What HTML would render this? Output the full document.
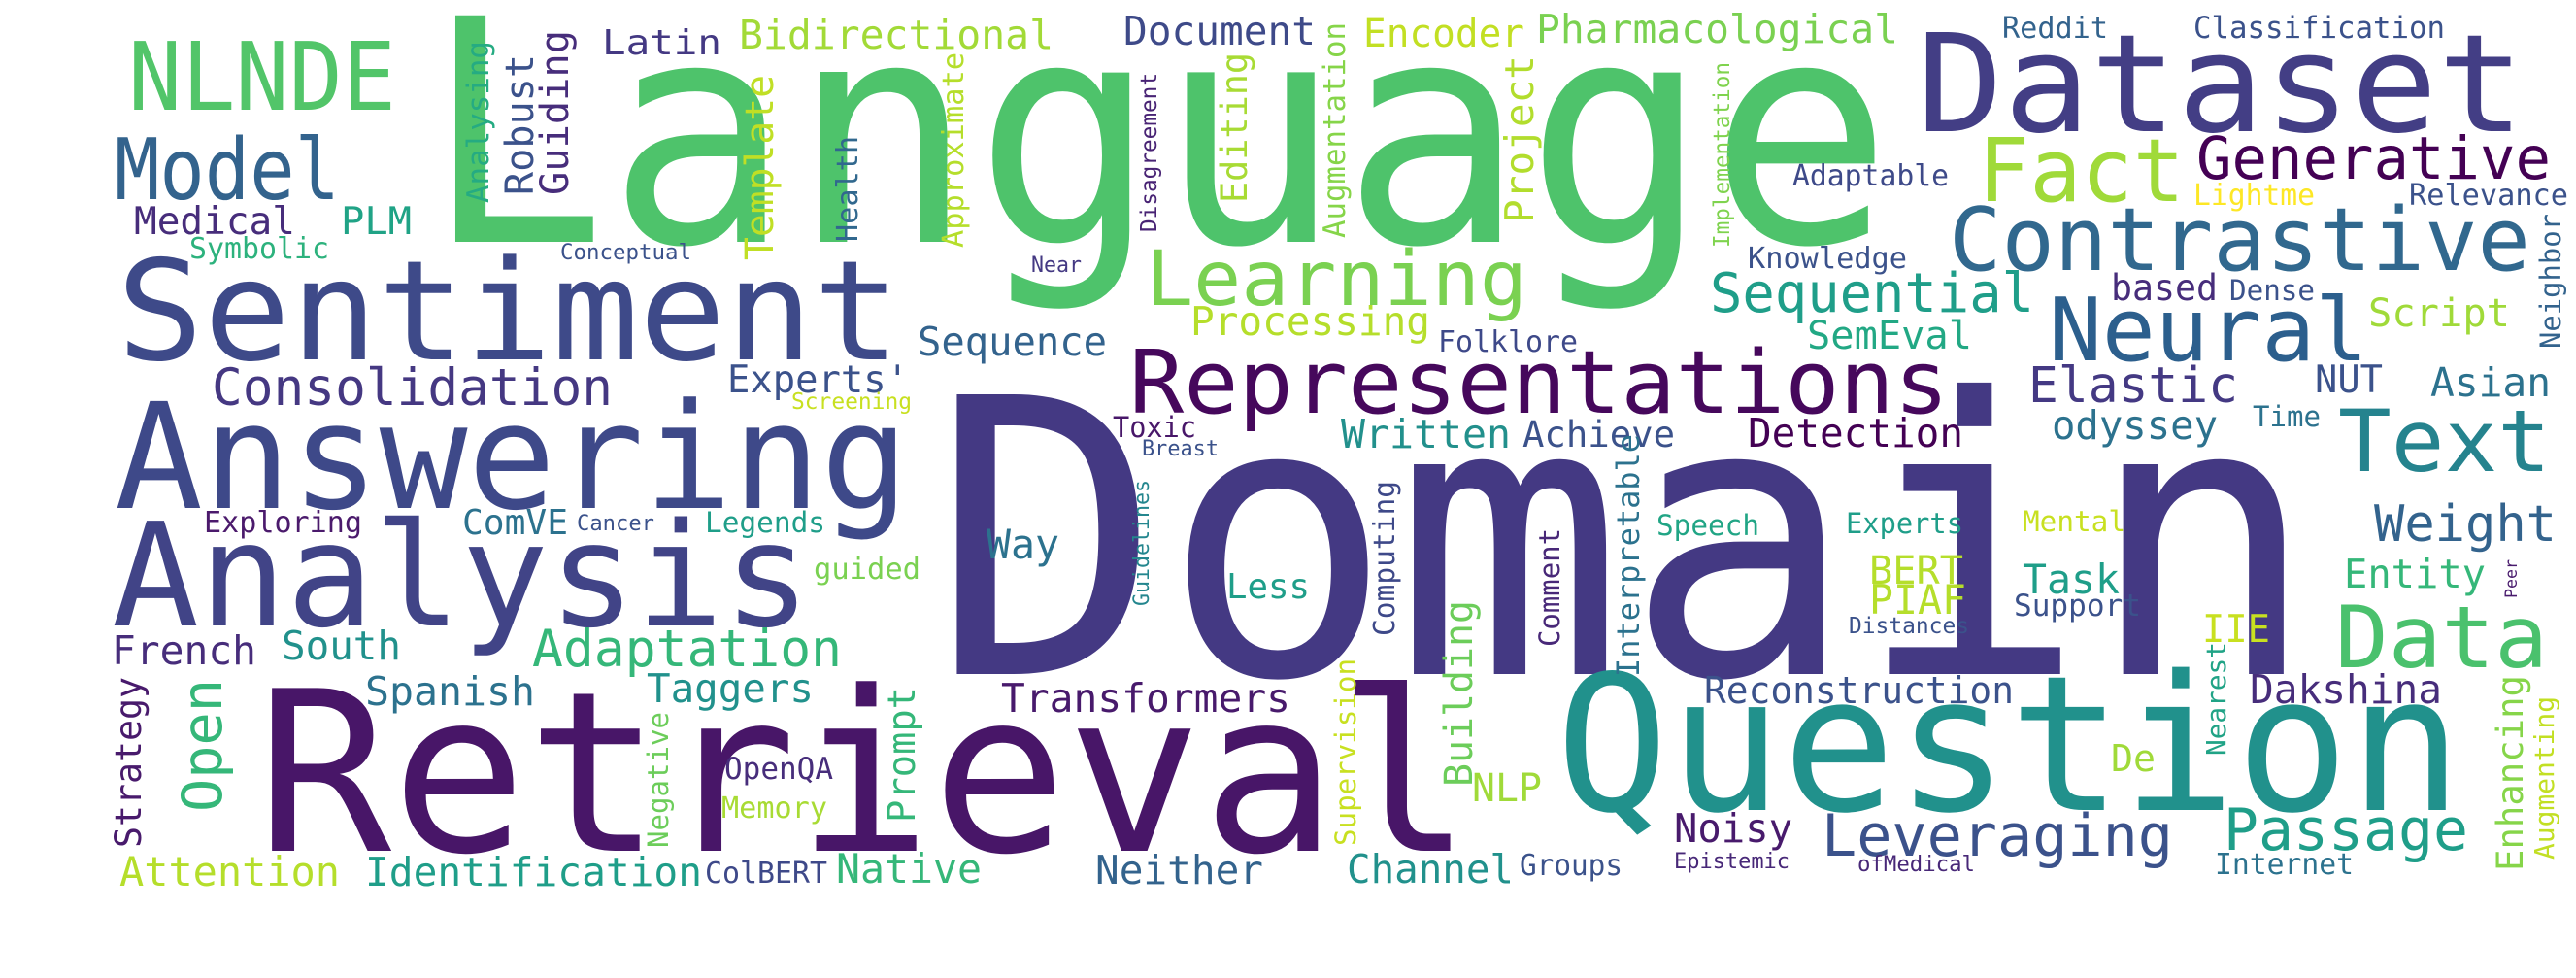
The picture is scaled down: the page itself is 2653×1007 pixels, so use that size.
<!DOCTYPE html>
<html><head><meta charset="utf-8"><style>
html,body{margin:0;padding:0;background:#fff;}
svg{display:block;}
text{font-family:"DejaVu Sans Mono","Liberation Mono",monospace;}
</style></head><body>
<svg width="2653" height="1007" viewBox="0 0 2653 1007" xmlns="http://www.w3.org/2000/svg">
<rect width="2653" height="1007" fill="#fff"/>
<g lengthAdjust="spacingAndGlyphs">
<!-- big words -->
<text x="436" y="249" font-size="320" fill="#4ec36b" textLength="1513" lengthAdjust="spacingAndGlyphs">Language</text>
<text x="959" y="694" font-size="395" fill="#443983" textLength="1428" lengthAdjust="spacingAndGlyphs">Domain</text>
<text x="264" y="876" font-size="230" fill="#481668" textLength="1252" lengthAdjust="spacingAndGlyphs">Retrieval</text>
<text x="1602" y="834" font-size="194" fill="#21918c" textLength="934" lengthAdjust="spacingAndGlyphs">Question</text>
<text x="1974" y="135" font-size="140" fill="#433e85" textLength="626" lengthAdjust="spacingAndGlyphs">Dataset</text>
<text x="120" y="370" font-size="143" fill="#3e4a89" textLength="807" lengthAdjust="spacingAndGlyphs">Sentiment</text>
<text x="118" y="523" font-size="151" fill="#3e4989" textLength="818" lengthAdjust="spacingAndGlyphs">Answering</text>
<text x="115" y="644" font-size="148" fill="#414487" textLength="720" lengthAdjust="spacingAndGlyphs">Analysis</text>
<text x="1163" y="425" font-size="90" fill="#46085c" textLength="844" lengthAdjust="spacingAndGlyphs">Representations</text>
<text x="132" y="113" font-size="97" fill="#52c569" textLength="276" lengthAdjust="spacingAndGlyphs">NLNDE</text>
<text x="118" y="205" font-size="87" fill="#33638d" textLength="232" lengthAdjust="spacingAndGlyphs">Model</text>
<text x="2037" y="207" font-size="90" fill="#a0da39" textLength="213" lengthAdjust="spacingAndGlyphs">Fact</text>
<text x="2262" y="184" font-size="61" fill="#440154" textLength="365" lengthAdjust="spacingAndGlyphs">Generative</text>
<text x="2007" y="278" font-size="90" fill="#31688e" textLength="599" lengthAdjust="spacingAndGlyphs">Contrastive</text>
<text x="2110" y="371" font-size="90" fill="#2c5f8d" textLength="329" lengthAdjust="spacingAndGlyphs">Neural</text>
<text x="2408" y="485" font-size="88" fill="#25838e" textLength="219" lengthAdjust="spacingAndGlyphs">Text</text>
<text x="2405" y="687" font-size="88" fill="#4ac16d" textLength="219" lengthAdjust="spacingAndGlyphs">Data</text>
<text x="1180" y="314" font-size="78" fill="#7ad151" textLength="393" lengthAdjust="spacingAndGlyphs">Learning</text>
<!-- medium/small horizontal -->
<text x="138" y="241" font-size="39" fill="#472d7b" textLength="166" lengthAdjust="spacingAndGlyphs">Medical</text>
<text x="351" y="241" font-size="39" fill="#20a386" textLength="73" lengthAdjust="spacingAndGlyphs">PLM</text>
<text x="195" y="266" font-size="30" fill="#2db27d" textLength="144" lengthAdjust="spacingAndGlyphs">Symbolic</text>
<text x="620" y="56" font-size="36" fill="#443983" textLength="123" lengthAdjust="spacingAndGlyphs">Latin</text>
<text x="577" y="267" font-size="22" fill="#3b528b" textLength="135" lengthAdjust="spacingAndGlyphs">Conceptual</text>
<text x="218" y="417" font-size="53" fill="#453882" textLength="413" lengthAdjust="spacingAndGlyphs">Consolidation</text>
<text x="749" y="404" font-size="39" fill="#3b528b" textLength="187" lengthAdjust="spacingAndGlyphs">Experts'</text>
<text x="815" y="421" font-size="23" fill="#c8e020" textLength="124" lengthAdjust="spacingAndGlyphs">Screening</text>
<text x="210" y="548" font-size="30" fill="#4b1a6c" textLength="163" lengthAdjust="spacingAndGlyphs">Exploring</text>
<text x="476" y="550" font-size="36" fill="#2c728e" textLength="109" lengthAdjust="spacingAndGlyphs">ComVE</text>
<text x="594" y="546" font-size="22" fill="#3b528b" textLength="80" lengthAdjust="spacingAndGlyphs">Cancer</text>
<text x="726" y="548" font-size="29" fill="#1f9e89" textLength="124" lengthAdjust="spacingAndGlyphs">Legends</text>
<text x="838" y="596" font-size="30" fill="#7ad151" textLength="110" lengthAdjust="spacingAndGlyphs">guided</text>
<text x="761" y="50" font-size="41" fill="#a2da37" textLength="324" lengthAdjust="spacingAndGlyphs">Bidirectional</text>
<text x="1157" y="46" font-size="41" fill="#3e4a89" textLength="198" lengthAdjust="spacingAndGlyphs">Document</text>
<text x="1404" y="48" font-size="40" fill="#c2df23" textLength="166" lengthAdjust="spacingAndGlyphs">Encoder</text>
<text x="1582" y="44" font-size="41" fill="#7ad151" textLength="373" lengthAdjust="spacingAndGlyphs">Pharmacological</text>
<text x="1062" y="280" font-size="22" fill="#443983" textLength="52" lengthAdjust="spacingAndGlyphs">Near</text>
<text x="1226" y="345" font-size="41" fill="#b5de2b" textLength="247" lengthAdjust="spacingAndGlyphs">Processing</text>
<text x="945" y="366" font-size="41" fill="#33638d" textLength="195" lengthAdjust="spacingAndGlyphs">Sequence</text>
<text x="1481" y="362" font-size="30" fill="#3e4989" textLength="144" lengthAdjust="spacingAndGlyphs">Folklore</text>
<text x="1146" y="450" font-size="29" fill="#481769" textLength="86" lengthAdjust="spacingAndGlyphs">Toxic</text>
<text x="1176" y="469" font-size="22" fill="#3b528b" textLength="79" lengthAdjust="spacingAndGlyphs">Breast</text>
<text x="1381" y="461" font-size="41" fill="#22908c" textLength="175" lengthAdjust="spacingAndGlyphs">Written</text>
<text x="1568" y="460" font-size="37" fill="#3b528b" textLength="157" lengthAdjust="spacingAndGlyphs">Achieve</text>
<text x="1016" y="575" font-size="42" fill="#2c728e" textLength="75" lengthAdjust="spacingAndGlyphs">Way</text>
<text x="1263" y="616" font-size="36" fill="#1f9e89" textLength="86" lengthAdjust="spacingAndGlyphs">Less</text>
<text x="1706" y="551" font-size="29" fill="#21a585" textLength="106" lengthAdjust="spacingAndGlyphs">Speech</text>
<text x="2062" y="39" font-size="30" fill="#33638d" textLength="109" lengthAdjust="spacingAndGlyphs">Reddit</text>
<text x="2259" y="39" font-size="31" fill="#3b528b" textLength="259" lengthAdjust="spacingAndGlyphs">Classification</text>
<text x="1846" y="191" font-size="30" fill="#3e4a89" textLength="161" lengthAdjust="spacingAndGlyphs">Adaptable</text>
<text x="2259" y="211" font-size="30" fill="#fde725" textLength="125" lengthAdjust="spacingAndGlyphs">Lightme</text>
<text x="2481" y="211" font-size="30" fill="#3b528b" textLength="164" lengthAdjust="spacingAndGlyphs">Relevance</text>
<text x="1800" y="276" font-size="30" fill="#3b528b" textLength="164" lengthAdjust="spacingAndGlyphs">Knowledge</text>
<text x="1761" y="321" font-size="56" fill="#1f9e89" textLength="334" lengthAdjust="spacingAndGlyphs">Sequential</text>
<text x="2174" y="309" font-size="37" fill="#472d7b" textLength="110" lengthAdjust="spacingAndGlyphs">based</text>
<text x="2296" y="309" font-size="29" fill="#3b528b" textLength="88" lengthAdjust="spacingAndGlyphs">Dense</text>
<text x="2439" y="336" font-size="40" fill="#a0da39" textLength="146" lengthAdjust="spacingAndGlyphs">Script</text>
<text x="1861" y="359" font-size="40" fill="#22a884" textLength="170" lengthAdjust="spacingAndGlyphs">SemEval</text>
<text x="2089" y="414" font-size="51" fill="#443983" textLength="216" lengthAdjust="spacingAndGlyphs">Elastic</text>
<text x="2384" y="404" font-size="39" fill="#3b528b" textLength="70" lengthAdjust="spacingAndGlyphs">NUT</text>
<text x="2503" y="408" font-size="41" fill="#2c728e" textLength="124" lengthAdjust="spacingAndGlyphs">Asian</text>
<text x="2320" y="439" font-size="29" fill="#2c728e" textLength="70" lengthAdjust="spacingAndGlyphs">Time</text>
<text x="2113" y="452" font-size="41" fill="#2c728e" textLength="171" lengthAdjust="spacingAndGlyphs">odyssey</text>
<text x="1800" y="460" font-size="41" fill="#440154" textLength="222" lengthAdjust="spacingAndGlyphs">Detection</text>
<text x="2445" y="557" font-size="52" fill="#33638d" textLength="188" lengthAdjust="spacingAndGlyphs">Weight</text>
<text x="1901" y="549" font-size="29" fill="#1f9e89" textLength="121" lengthAdjust="spacingAndGlyphs">Experts</text>
<text x="2083" y="547" font-size="29" fill="#c8e020" textLength="106" lengthAdjust="spacingAndGlyphs">Mental</text>
<text x="1925" y="601" font-size="40" fill="#b5de2b" textLength="97" lengthAdjust="spacingAndGlyphs">BERT</text>
<text x="2083" y="611" font-size="42" fill="#1f9e89" textLength="100" lengthAdjust="spacingAndGlyphs">Task</text>
<text x="2414" y="605" font-size="41" fill="#35b779" textLength="146" lengthAdjust="spacingAndGlyphs">Entity</text>
<text x="1925" y="632" font-size="42" fill="#b5de2b" textLength="100" lengthAdjust="spacingAndGlyphs">PIAF</text>
<text x="2074" y="634" font-size="31" fill="#3b528b" textLength="131" lengthAdjust="spacingAndGlyphs">Support</text>
<text x="1904" y="652" font-size="23" fill="#3b528b" textLength="124" lengthAdjust="spacingAndGlyphs">Distances</text>
<text x="2268" y="661" font-size="39" fill="#c8e020" textLength="70" lengthAdjust="spacingAndGlyphs">IIE</text>
<text x="1755" y="724" font-size="38" fill="#3b528b" textLength="319" lengthAdjust="spacingAndGlyphs">Reconstruction</text>
<text x="2317" y="724" font-size="41" fill="#472d7b" textLength="198" lengthAdjust="spacingAndGlyphs">Dakshina</text>
<text x="2174" y="794" font-size="38" fill="#a0da39" textLength="46" lengthAdjust="spacingAndGlyphs">De</text>
<text x="1724" y="867" font-size="41" fill="#481a6c" textLength="122" lengthAdjust="spacingAndGlyphs">Noisy</text>
<text x="1876" y="881" font-size="60" fill="#3b528b" textLength="362" lengthAdjust="spacingAndGlyphs">Leveraging</text>
<text x="2290" y="875" font-size="60" fill="#1f9e89" textLength="252" lengthAdjust="spacingAndGlyphs">Passage</text>
<text x="1724" y="894" font-size="22" fill="#482878" textLength="119" lengthAdjust="spacingAndGlyphs">Epistemic</text>
<text x="1913" y="897" font-size="22" fill="#482878" textLength="121" lengthAdjust="spacingAndGlyphs">ofMedical</text>
<text x="2281" y="900" font-size="30" fill="#2c728e" textLength="143" lengthAdjust="spacingAndGlyphs">Internet</text>
<text x="115" y="684" font-size="41" fill="#472d7b" textLength="149" lengthAdjust="spacingAndGlyphs">French</text>
<text x="290" y="679" font-size="41" fill="#21918c" textLength="123" lengthAdjust="spacingAndGlyphs">South</text>
<text x="548" y="686" font-size="53" fill="#35b779" textLength="319" lengthAdjust="spacingAndGlyphs">Adaptation</text>
<text x="376" y="726" font-size="41" fill="#2c728e" textLength="175" lengthAdjust="spacingAndGlyphs">Spanish</text>
<text x="666" y="723" font-size="41" fill="#21918c" textLength="172" lengthAdjust="spacingAndGlyphs">Taggers</text>
<text x="746" y="802" font-size="31" fill="#472d7b" textLength="112" lengthAdjust="spacingAndGlyphs">OpenQA</text>
<text x="743" y="842" font-size="30" fill="#a8db34" textLength="109" lengthAdjust="spacingAndGlyphs">Memory</text>
<text x="123" y="912" font-size="42" fill="#b5de2b" textLength="227" lengthAdjust="spacingAndGlyphs">Attention</text>
<text x="376" y="912" font-size="41" fill="#1f9e89" textLength="347" lengthAdjust="spacingAndGlyphs">Identification</text>
<text x="726" y="909" font-size="30" fill="#3e4989" textLength="126" lengthAdjust="spacingAndGlyphs">ColBERT</text>
<text x="861" y="909" font-size="42" fill="#35b779" textLength="150" lengthAdjust="spacingAndGlyphs">Native</text>
<text x="1031" y="733" font-size="41" fill="#481a6c" textLength="298" lengthAdjust="spacingAndGlyphs">Transformers</text>
<text x="1516" y="825" font-size="40" fill="#a0da39" textLength="72" lengthAdjust="spacingAndGlyphs">NLP</text>
<text x="1128" y="910" font-size="41" fill="#33638d" textLength="173" lengthAdjust="spacingAndGlyphs">Neither</text>
<text x="1387" y="909" font-size="41" fill="#21918c" textLength="172" lengthAdjust="spacingAndGlyphs">Channel</text>
<text x="1565" y="901" font-size="30" fill="#3b528b" textLength="106" lengthAdjust="spacingAndGlyphs">Groups</text>
<!-- vertical words: translate(baselineX, bottomY) rotate(-90) -->
<text transform="translate(503,209) rotate(-90)" font-size="31" fill="#25ab82" textLength="167" lengthAdjust="spacingAndGlyphs">Analysing</text>
<text transform="translate(549,201) rotate(-90)" font-size="40" fill="#3b528b" textLength="145" lengthAdjust="spacingAndGlyphs">Robust</text>
<text transform="translate(585,201) rotate(-90)" font-size="40" fill="#472d7b" textLength="170" lengthAdjust="spacingAndGlyphs">Guiding</text>
<text transform="translate(796,268) rotate(-90)" font-size="40" fill="#c0df25" textLength="191" lengthAdjust="spacingAndGlyphs">Template</text>
<text transform="translate(883,249) rotate(-90)" font-size="30" fill="#31688e" textLength="109" lengthAdjust="spacingAndGlyphs">Health</text>
<text transform="translate(992,255) rotate(-90)" font-size="30" fill="#b5de2b" textLength="201" lengthAdjust="spacingAndGlyphs">Approximate</text>
<text transform="translate(1284,209) rotate(-90)" font-size="37" fill="#a8db34" textLength="155" lengthAdjust="spacingAndGlyphs">Editing</text>
<text transform="translate(1191,239) rotate(-90)" font-size="23" fill="#482374" textLength="164" lengthAdjust="spacingAndGlyphs">Disagreement</text>
<text transform="translate(1385,245) rotate(-90)" font-size="31" fill="#86d549" textLength="222" lengthAdjust="spacingAndGlyphs">Augmentation</text>
<text transform="translate(1579,230) rotate(-90)" font-size="41" fill="#b2dd2d" textLength="173" lengthAdjust="spacingAndGlyphs">Project</text>
<text transform="translate(1781,255) rotate(-90)" font-size="23" fill="#7fd34e" textLength="191" lengthAdjust="spacingAndGlyphs">Implementation</text>
<text transform="translate(2637,359) rotate(-90)" font-size="29" fill="#33638d" textLength="139" lengthAdjust="spacingAndGlyphs">Neighbor</text>
<text transform="translate(2592,616) rotate(-90)" font-size="17" fill="#481a6c" textLength="40" lengthAdjust="spacingAndGlyphs">Peer</text>
<text transform="translate(1183,624) rotate(-90)" font-size="22" fill="#24868e" textLength="130" lengthAdjust="spacingAndGlyphs">Guidelines</text>
<text transform="translate(1436,655) rotate(-90)" font-size="30" fill="#3e4989" textLength="160" lengthAdjust="spacingAndGlyphs">Computing</text>
<text transform="translate(1606,666) rotate(-90)" font-size="29" fill="#482878" textLength="122" lengthAdjust="spacingAndGlyphs">Comment</text>
<text transform="translate(1688,697) rotate(-90)" font-size="32" fill="#2c728e" textLength="250" lengthAdjust="spacingAndGlyphs">Interpretable</text>
<text transform="translate(2292,778) rotate(-90)" font-size="28" fill="#20a386" textLength="117" lengthAdjust="spacingAndGlyphs">Nearest</text>
<text transform="translate(2598,897) rotate(-90)" font-size="37" fill="#86d549" textLength="202" lengthAdjust="spacingAndGlyphs">Enhancing</text>
<text transform="translate(2630,885) rotate(-90)" font-size="28" fill="#c2df23" textLength="168" lengthAdjust="spacingAndGlyphs">Augmenting</text>
<text transform="translate(145,873) rotate(-90)" font-size="37" fill="#481a6c" textLength="176" lengthAdjust="spacingAndGlyphs">Strategy</text>
<text transform="translate(228,836) rotate(-90)" font-size="57" fill="#35b779" textLength="137" lengthAdjust="spacingAndGlyphs">Open</text>
<text transform="translate(688,873) rotate(-90)" font-size="29" fill="#6ccd5a" textLength="140" lengthAdjust="spacingAndGlyphs">Negative</text>
<text transform="translate(942,847) rotate(-90)" font-size="39" fill="#35b779" textLength="140" lengthAdjust="spacingAndGlyphs">Prompt</text>
<text transform="translate(1396,871) rotate(-90)" font-size="29" fill="#c8e020" textLength="193" lengthAdjust="spacingAndGlyphs">Supervision</text>
<text transform="translate(1516,810) rotate(-90)" font-size="40" fill="#6ccd5a" textLength="192" lengthAdjust="spacingAndGlyphs">Building</text>
</g>
</svg>
</body></html>
